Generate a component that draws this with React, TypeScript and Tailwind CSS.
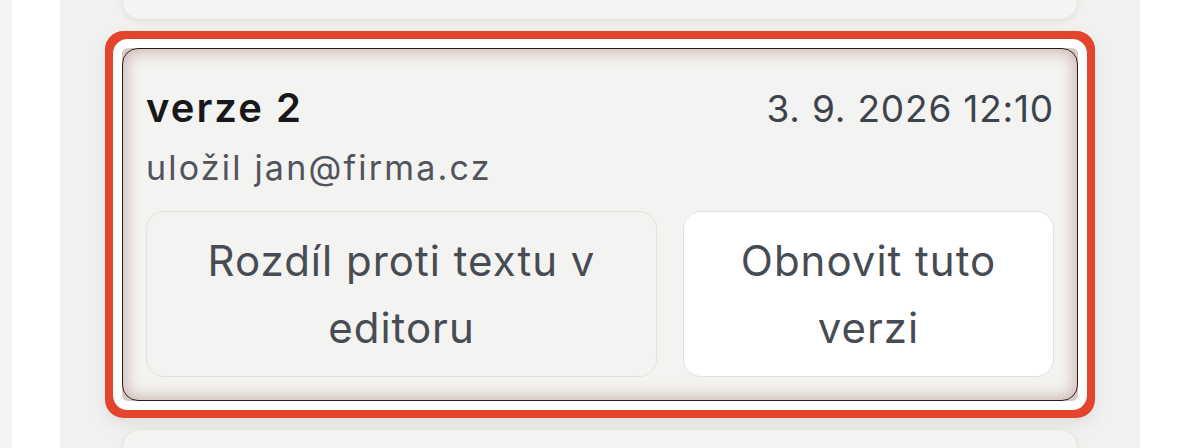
import React from "react";

function PlainCard({ className = "" }: { className?: string }) {
  return (
    <div
      className={`rounded-[18px] border border-[#e3e3e0] bg-[#f4f4f2] shadow-[0_2px_6px_rgba(0,0,0,0.06)] ${className}`}
    />
  );
}

function VersionCard() {
  return (
    <div className="rounded-[6px] bg-[#d8c9c5] shadow-[0_0_0_9px_#ffffff,0_0_0_17px_#e2452b,0_6px_16px_17px_rgba(0,0,0,0.08)]">
      <div className="rounded-[16px] border border-[#2a1c1c] bg-[#f3f3f1] px-[23px] pt-[30px] pb-[23px] shadow-[inset_0_0_14px_4px_rgba(150,100,90,0.38)]">
        <div className="flex items-baseline justify-between">
          <h3 className="text-[40px] leading-[57px] font-semibold tracking-[2px] text-[#18181a]">verze 2</h3>
          <span className="text-[37px] leading-[57px] tracking-[0.8px] text-[#3d434d]">3. 9. 2026 12:10</span>
        </div>
        <p className="mt-[6px] text-[34px] leading-[50px] tracking-[2.2px] text-[#52545c]">uložil jan@firma.cz</p>
        <div className="mt-[18px] grid grid-cols-[511px_1fr] gap-[26px]">
          <button className="rounded-[18px] border border-[#e1e1dd] bg-[#f3f3f1] px-[20px] py-[15px] text-[42px] leading-[67px] tracking-[1px] text-[#474b53]">
            Rozdíl proti textu v editoru
          </button>
          <button className="rounded-[18px] border border-[#e1e1dd] bg-white px-[20px] py-[15px] text-[42px] leading-[67px] tracking-[1px] text-[#474b53]">
            Obnovit tuto verzi
          </button>
        </div>
      </div>
    </div>
  );
}

export default function App() {
  return (
    <div className="flex h-[448px] overflow-hidden bg-white font-['Inter','Noto_Sans',sans-serif]">
      <div className="w-[12px] bg-[#f3f3f2]" />
      <div className="w-[48px] bg-white" />
      <div className="w-[1080px] bg-[#f1f1ef] px-[62px]">
        <div className="-mt-[80px] flex flex-col gap-[28px]">
          <PlainCard className="h-[100px]" />
          <VersionCard />
          <PlainCard className="h-[120px]" />
        </div>
      </div>
      <div className="flex-1 bg-white" />
    </div>
  );
}
